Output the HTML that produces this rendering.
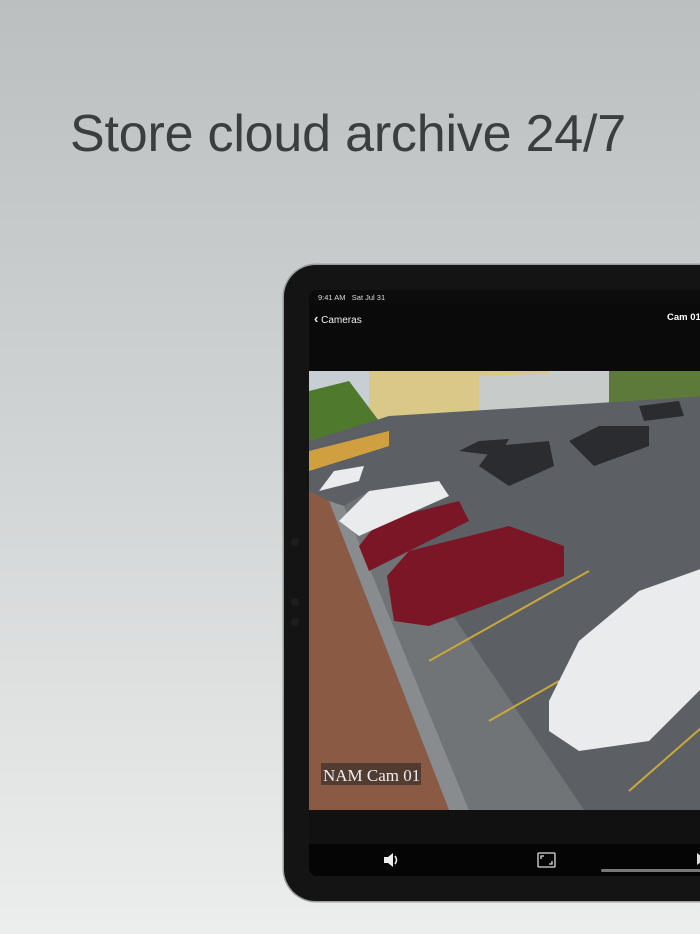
<!DOCTYPE html>
<html><head><meta charset="utf-8"><style>
html,body{margin:0;padding:0}
body{width:700px;height:934px;overflow:hidden;position:relative;background:linear-gradient(#bbbfc0 0%,#d2d5d5 50%,#eceeed 100%);font-family:"Liberation Sans",sans-serif}
h1{position:absolute;left:70px;top:104px;margin:0;font-weight:400;font-size:52px;color:#3b3e3f;letter-spacing:-0.2px;white-space:nowrap}
.dev{position:absolute;left:284px;top:265px;width:460px;height:636px;background:#141414;border-radius:32px;box-shadow:0 0 0 1.5px #9a9c9d}
.scr{position:absolute;left:309px;top:290px;width:400px;height:586px;background:#0c0c0c;border-radius:8px;overflow:hidden}
.t{position:absolute;color:#fff;font-size:8px}
</style></head><body>
<h1>Store cloud archive 24/7</h1>
<div class="dev"></div>
<div class="scr">
 <div class="t" style="left:9px;top:3px;font-size:7.5px;color:#ddd">9:41 AM&nbsp;&nbsp;&nbsp;Sat Jul 31</div>
 <div style="position:absolute;left:0;top:14px;width:400px;height:67px;background:#0a0a0a"></div>
 <div class="t" style="left:5px;top:21px;font-size:10px;color:#eee"><span style="font-size:13px;font-weight:bold">&lsaquo;</span> Cameras</div>
 <div class="t" style="left:358px;top:22px;font-size:9.5px;font-weight:bold">Cam 01</div>
 <svg style="position:absolute;left:0;top:81px" width="400" height="439" viewBox="0 0 400 439">
  <rect width="400" height="439" fill="#5f6265"/>
  <rect width="400" height="60" fill="#c8cfd4"/>
  <polygon points="60,0 240,0 240,55 60,70" fill="#d9c888"/>
  <polygon points="170,5 320,0 320,40 170,45" fill="#c7cbc9"/>
  <polygon points="300,0 400,0 400,25 300,35" fill="#5d7a3a"/>
  <polygon points="0,20 40,10 70,50 0,90" fill="#4f7a2e"/>
  <polygon points="0,70 80,45 400,25 400,439 0,439" fill="#5c6064"/>
  <polygon points="0,80 80,60 80,75 0,100" fill="#d0a040"/>
  <polygon points="0,120 20,130 140,439 0,439" fill="#8a5a44"/>
  <polygon points="20,130 35,135 160,439 140,439" fill="#888c8f"/>
  <polygon points="35,135 60,120 275,439 160,439" fill="#707477"/>
  <line x1="120" y1="290" x2="280" y2="200" stroke="#c8a83a" stroke-width="2"/>
  <line x1="180" y1="350" x2="250" y2="310" stroke="#c8a83a" stroke-width="2"/>
  <line x1="320" y1="420" x2="400" y2="350" stroke="#c8a83a" stroke-width="2"/>
  <g fill="#7a1626"><path d="M78,205 L100,180 L200,155 L255,175 L255,205 L120,255 L85,250 Z"/><path d="M50,175 L70,150 L150,130 L160,150 L60,200 Z"/></g>
  <g fill="#e9ebec"><path d="M240,330 L270,270 L330,220 L400,195 L400,310 L340,370 L270,380 L240,360 Z"/><path d="M30,150 L60,120 L130,110 L140,125 L50,165 Z"/><path d="M10,120 L25,100 L55,95 L50,110 Z"/></g>
  <g fill="#2a2c2f"><path d="M170,95 L185,75 L240,70 L245,95 L200,115 Z"/><path d="M260,70 L290,55 L340,55 L340,75 L285,95 Z"/><path d="M150,80 L170,70 L200,68 L190,85 Z"/><path d="M330,35 L370,30 L375,45 L335,50 Z"/></g>
  <rect x="12" y="392" width="100" height="22" fill="#3a2e28" opacity=".7"/>
  <text x="14" y="410" font-family="Liberation Serif,serif" font-size="17" fill="#eee">NAM Cam 01</text>
 </svg>
 <div style="position:absolute;left:0;top:520px;width:400px;height:34px;background:#111"></div>
 <div style="position:absolute;left:0;top:554px;width:400px;height:32px;background:#050505"></div>
 <svg style="position:absolute;left:74px;top:562px" width="18" height="16" viewBox="0 0 18 16"><path d="M1,5 H5 L10,1 V15 L5,11 H1 Z" fill="#eee"/><path d="M12,4 Q15,8 12,12" stroke="#eee" stroke-width="1.6" fill="none"/></svg>
 <svg style="position:absolute;left:228px;top:562px" width="19" height="16" viewBox="0 0 19 16"><rect x="1" y="1" width="17" height="14" rx="1" fill="none" stroke="#ddd" stroke-width="1.3"/><path d="M4,7 V4 H7 M15,9 V12 H12" stroke="#ddd" stroke-width="1.3" fill="none"/></svg>
 <div style="position:absolute;left:292px;top:579px;width:108px;height:3px;border-radius:2px;background:#777"></div>
 <div style="position:absolute;left:388px;top:563px;width:0;height:0;border-left:8px solid #ddd;border-top:6px solid transparent;border-bottom:6px solid transparent"></div>
</div>
<div style="position:absolute;left:291px;top:538px;width:8px;height:8px;border-radius:50%;background:#1e1e1e"></div>
<div style="position:absolute;left:291px;top:598px;width:8px;height:8px;border-radius:50%;background:#1e1e1e"></div>
<div style="position:absolute;left:291px;top:618px;width:8px;height:8px;border-radius:50%;background:#1e1e1e"></div>
</body></html>
